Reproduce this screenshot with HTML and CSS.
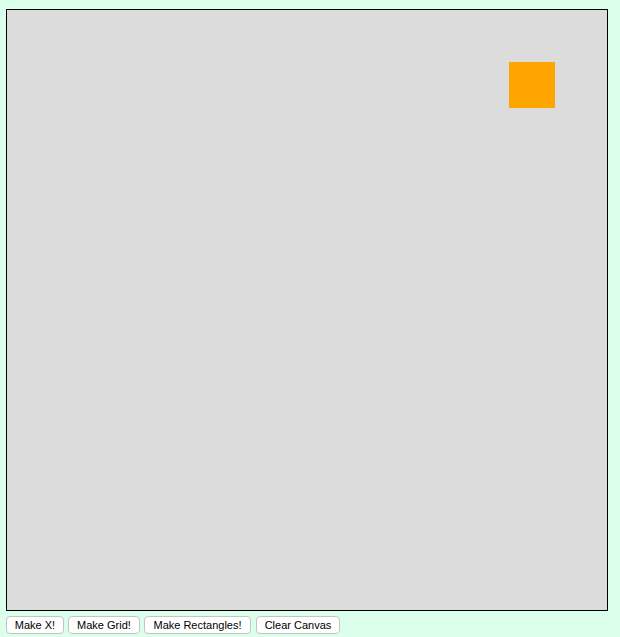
FILE: index.html
```html
<!DOCTYPE html>
<html>
<head>
<meta charset="utf-8">
<link rel="stylesheet" href="styles.css">
</head>
<body>
<div class="canvas">
  <div class="rect"></div>
</div>
<div class="controls">
  <button class="btn b1">Make X!</button>
  <button class="btn b2">Make Grid!</button>
  <button class="btn b3">Make Rectangles!</button>
  <button class="btn b4">Clear Canvas</button>
</div>
</body>
</html>
```
FILE: styles.css
```css
html, body {
  background: #dcffec;
}
body {
  margin: 9px 6px 0 6px;
  font-family: "Liberation Sans", Arial, sans-serif;
}
.canvas {
  position: relative;
  width: 600px;
  height: 600px;
  border: 1px solid #000;
  background: #dcdcdc;
}
.rect {
  position: absolute;
  left: 502px;
  top: 52px;
  width: 46px;
  height: 46px;
  background: #ffa500;
}
.controls {
  display: flex;
  gap: 4px;
  margin-top: 5px;
}
.btn {
  box-sizing: border-box;
  height: 18px;
  padding: 0;
  background: #fff;
  border: 1px solid #c4c4c4;
  border-radius: 4px;
  font-family: "Liberation Sans", Arial, sans-serif;
  font-size: 11px;
  color: #000;
  line-height: 16px;
  text-align: center;
}
.b1 { width: 58px; }
.b2 { width: 72px; }
.b3 { width: 107px; }
.b4 { width: 84px; margin-left: 1px; }
```
